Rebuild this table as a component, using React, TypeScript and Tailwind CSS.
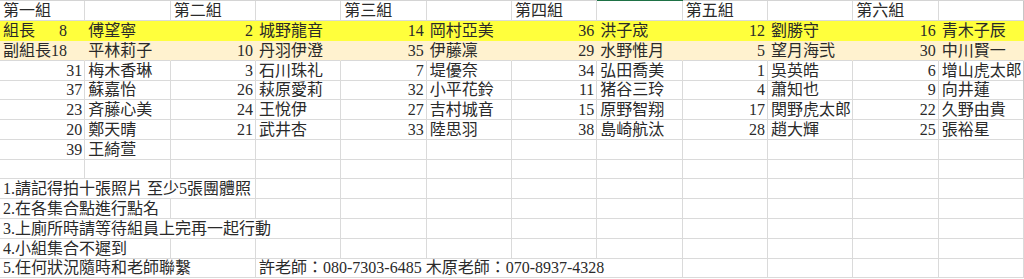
import clsx from "clsx";

type Cell = { t?: string; span?: number };
type Row = { cells: Cell[]; h: string; fill?: "leader" | "vice" };

const spanClass: Record<number, string> = {
  1: "",
  2: "col-span-2",
  3: "col-span-3",
  4: "col-span-4",
  5: "col-span-5",
};

const line = (...vals: string[]): Cell[] => {
  const out: Cell[] = vals.map((t) => ({ t }));
  while (out.length < 12) out.push({});
  return out;
};

const rows: Row[] = [
  { h: "h-[20px]", cells: line("第一組", "", "第二組", "", "第三組", "", "第四組", "", "第五組", "", "第六組", "") },
  {
    h: "h-[20px]",
    fill: "leader",
    cells: line("組長      8", "傅望寧", "2", "城野龍音", "14", "岡村亞美", "36", "洪子宬", "12", "劉勝守", "16", "青木子辰"),
  },
  {
    h: "h-[20px]",
    fill: "vice",
    cells: line("副組長18", "平林莉子", "10", "丹羽伊澄", "35", "伊藤凜", "29", "水野惟月", "5", "望月海弐", "30", "中川賢一"),
  },
  { h: "h-[19px]", cells: line("31", "梅木香琳", "3", "石川珠礼", "7", "堤優奈", "34", "弘田喬美", "1", "吳英皓", "6", "增山虎太郎") },
  { h: "h-[20px]", cells: line("37", "蘇嘉怡", "26", "萩原愛莉", "32", "小平花鈴", "11", "猪谷三玲", "4", "蕭知也", "9", "向井蓮") },
  { h: "h-[20px]", cells: line("23", "斉藤心美", "24", "王悅伊", "27", "吉村城音", "15", "原野智翔", "17", "関野虎太郎", "22", "久野由貴") },
  { h: "h-[20px]", cells: line("20", "鄭天晴", "21", "武井杏", "33", "陸思羽", "38", "島崎航汰", "28", "趙大輝", "25", "張裕星") },
  { h: "h-[20px]", cells: line("39", "王綺萱") },
  { h: "h-[19px]", cells: line() },
  { h: "h-[20px]", cells: [{ t: "1.請記得拍十張照片 至少5張團體照", span: 3 }, ...line().slice(3)] },
  { h: "h-[20px]", cells: [{ t: "2.在各集合點進行點名", span: 2 }, ...line().slice(2)] },
  { h: "h-[20px]", cells: [{ t: "3.上廁所時請等待組員上完再一起行動", span: 4 }, ...line().slice(4)] },
  { h: "h-[19px]", cells: [{ t: "4.小組集合不遲到", span: 2 }, ...line().slice(2)] },
  {
    h: "h-[20px]",
    cells: [
      { t: "5.任何狀況隨時和老師聯繫", span: 3 },
      { t: "許老師：080-7303-6485 木原老師：070-8937-4328", span: 5 },
      ...line().slice(8),
    ],
  },
];

export default function App() {
  return (
    <div
      className="w-[1024px] h-[279px] overflow-hidden bg-white text-[16px] text-[#2a2a2a]"
      style={{ fontFamily: '"Liberation Serif", "Noto Sans CJK TC", serif' }}
    >
      <div className="grid grid-cols-12 h-px">
        {Array.from({ length: 12 }).map((_, i) => (
          <div key={i} className={i === 7 ? "bg-[#1e7145]" : "bg-[#d4d4d4]"} />
        ))}
      </div>
      {rows.map((row, r) => (
        <div key={r} className={clsx("grid grid-cols-12", row.h)}>
          {row.cells.map((c, i) => {
            const num = !!c.t && /^\d+$/.test(c.t);
            const last = i + (c.span ?? 1) === 12;
            return (
              <div
                key={i}
                className={clsx(
                  "flex items-end overflow-visible whitespace-pre border-r border-b px-[2px] leading-[19px]",
                  spanClass[c.span ?? 1],
                  num ? "justify-end" : "justify-start pl-[3px]",
                  i === 0 && !num && "pl-[2px]",
                  row.fill === "leader" && "bg-[#ffff3c] border-[#ffff3c]",
                  row.fill === "vice" && "bg-[#fff2cf] border-r-[#fff2cf] border-b-[#d9d9d9]",
                  !row.fill && "border-[#dadada]",
                  !row.fill && last && "border-r-[#c6c6c6]"
                )}
              >
                {c.t}
              </div>
            );
          })}
        </div>
      ))}
    </div>
  );
}
